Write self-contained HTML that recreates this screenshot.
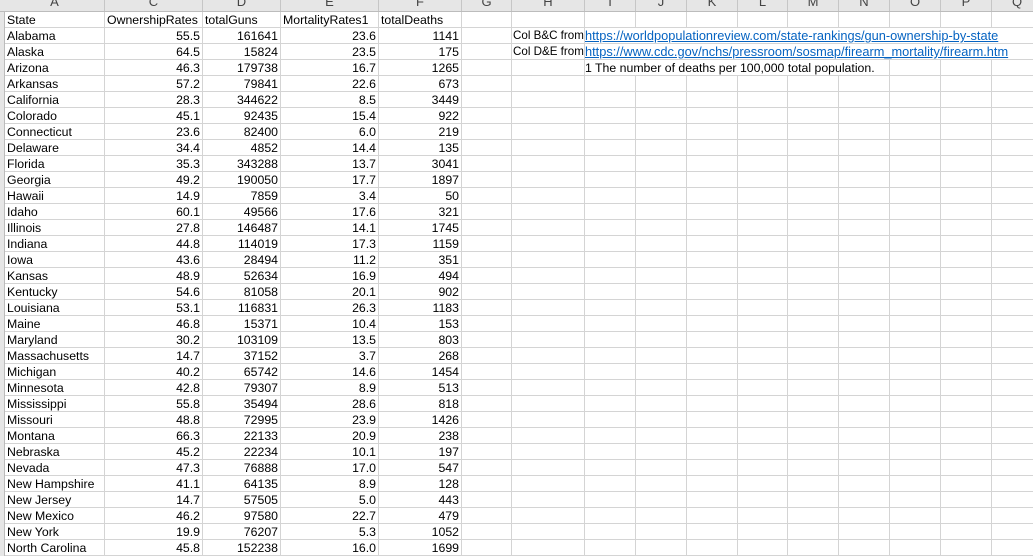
<!DOCTYPE html>
<html><head><meta charset="utf-8"><style>
html,body{margin:0;padding:0;width:1033px;height:556px;overflow:hidden;background:#fff;font-family:"Liberation Sans",Arial,sans-serif;}
#hdr{position:absolute;left:0;top:0;width:1033px;height:11px;background:#e6e6e6;border-bottom:1px solid #bcbcbc;overflow:hidden;}
#hdr div{position:absolute;top:-6px;height:17px;text-align:center;font-size:13px;color:#444;border-right:1px solid #c6c6c6;box-sizing:border-box;}
#left{position:absolute;left:0;top:12px;width:5px;height:544px;background:#e6e6e6;border-right:1px solid #bcbcbc;box-sizing:border-box;}
#grid{position:absolute;left:5px;top:12px;width:1028px;height:544px;background:repeating-linear-gradient(to bottom,transparent 0,transparent 15px,#d4d4d4 15px,#d4d4d4 16px);}
.v{position:absolute;top:12px;width:1px;height:544px;background:#d4d4d4;}
.r{position:absolute;left:0;width:1033px;height:15px;font-size:12.3px;line-height:16px;white-space:nowrap;color:#000;}
.r span{position:absolute;top:0;}
.a{left:7px;}
.c{left:104px;width:96px;text-align:right;}
.d{left:202px;width:76px;text-align:right;}
.e{left:280px;width:96px;text-align:right;}
.f{left:378px;width:81px;text-align:right;}
.h1{left:513px;font-size:11.6px;}
.c1{left:585px;background:#fff;padding-right:3px;height:15px;}
a{color:#0563c1;text-decoration:underline;font-size:12.8px;}
</style></head><body>
<div id="hdr">
<div style="left:5px;width:100px">A</div><div style="left:105px;width:98px">C</div><div style="left:203px;width:78px">D</div><div style="left:281px;width:98px">E</div><div style="left:379px;width:83px">F</div><div style="left:462px;width:50px">G</div><div style="left:512px;width:73px">H</div><div style="left:585px;width:51px">I</div><div style="left:636px;width:51px">J</div><div style="left:687px;width:51px">K</div><div style="left:738px;width:50px">L</div><div style="left:788px;width:51px">M</div><div style="left:839px;width:51px">N</div><div style="left:890px;width:51px">O</div><div style="left:941px;width:51px">P</div><div style="left:992px;width:51px">Q</div>
</div>
<div id="left"></div>
<div id="grid"></div>
<div class="v" style="left:104px"></div><div class="v" style="left:202px"></div><div class="v" style="left:280px"></div><div class="v" style="left:378px"></div><div class="v" style="left:461px"></div><div class="v" style="left:511px"></div><div class="v" style="left:584px"></div><div class="v" style="left:635px"></div><div class="v" style="left:686px"></div><div class="v" style="left:737px"></div><div class="v" style="left:787px"></div><div class="v" style="left:838px"></div><div class="v" style="left:889px"></div><div class="v" style="left:940px"></div><div class="v" style="left:991px"></div>

<div class="r" style="top:12px"><span class="a">State</span><span style="left:107px">OwnershipRates</span><span style="left:205px">totalGuns</span><span style="left:283px">MortalityRates1</span><span style="left:381px">totalDeaths</span></div>
<div class="r" style="top:28px"><span class="a">Alabama</span><span class="c">55.5</span><span class="d">161641</span><span class="e">23.6</span><span class="f">1141</span><span class="h1">Col B&amp;C from</span><span class="c1"><a>https://worldpopulationreview.com/state-rankings/gun-ownership-by-state</a></span></div>
<div class="r" style="top:44px"><span class="a">Alaska</span><span class="c">64.5</span><span class="d">15824</span><span class="e">23.5</span><span class="f">175</span><span class="h1">Col D&amp;E from</span><span class="c1"><a>https://www.cdc.gov/nchs/pressroom/sosmap/firearm_mortality/firearm.htm</a></span></div>
<div class="r" style="top:60px"><span class="a">Arizona</span><span class="c">46.3</span><span class="d">179738</span><span class="e">16.7</span><span class="f">1265</span><span class="c1">1 The number of deaths per 100,000 total population.</span></div>
<div class="r" style="top:76px"><span class="a">Arkansas</span><span class="c">57.2</span><span class="d">79841</span><span class="e">22.6</span><span class="f">673</span></div>
<div class="r" style="top:92px"><span class="a">California</span><span class="c">28.3</span><span class="d">344622</span><span class="e">8.5</span><span class="f">3449</span></div>
<div class="r" style="top:108px"><span class="a">Colorado</span><span class="c">45.1</span><span class="d">92435</span><span class="e">15.4</span><span class="f">922</span></div>
<div class="r" style="top:124px"><span class="a">Connecticut</span><span class="c">23.6</span><span class="d">82400</span><span class="e">6.0</span><span class="f">219</span></div>
<div class="r" style="top:140px"><span class="a">Delaware</span><span class="c">34.4</span><span class="d">4852</span><span class="e">14.4</span><span class="f">135</span></div>
<div class="r" style="top:156px"><span class="a">Florida</span><span class="c">35.3</span><span class="d">343288</span><span class="e">13.7</span><span class="f">3041</span></div>
<div class="r" style="top:172px"><span class="a">Georgia</span><span class="c">49.2</span><span class="d">190050</span><span class="e">17.7</span><span class="f">1897</span></div>
<div class="r" style="top:188px"><span class="a">Hawaii</span><span class="c">14.9</span><span class="d">7859</span><span class="e">3.4</span><span class="f">50</span></div>
<div class="r" style="top:204px"><span class="a">Idaho</span><span class="c">60.1</span><span class="d">49566</span><span class="e">17.6</span><span class="f">321</span></div>
<div class="r" style="top:220px"><span class="a">Illinois</span><span class="c">27.8</span><span class="d">146487</span><span class="e">14.1</span><span class="f">1745</span></div>
<div class="r" style="top:236px"><span class="a">Indiana</span><span class="c">44.8</span><span class="d">114019</span><span class="e">17.3</span><span class="f">1159</span></div>
<div class="r" style="top:252px"><span class="a">Iowa</span><span class="c">43.6</span><span class="d">28494</span><span class="e">11.2</span><span class="f">351</span></div>
<div class="r" style="top:268px"><span class="a">Kansas</span><span class="c">48.9</span><span class="d">52634</span><span class="e">16.9</span><span class="f">494</span></div>
<div class="r" style="top:284px"><span class="a">Kentucky</span><span class="c">54.6</span><span class="d">81058</span><span class="e">20.1</span><span class="f">902</span></div>
<div class="r" style="top:300px"><span class="a">Louisiana</span><span class="c">53.1</span><span class="d">116831</span><span class="e">26.3</span><span class="f">1183</span></div>
<div class="r" style="top:316px"><span class="a">Maine</span><span class="c">46.8</span><span class="d">15371</span><span class="e">10.4</span><span class="f">153</span></div>
<div class="r" style="top:332px"><span class="a">Maryland</span><span class="c">30.2</span><span class="d">103109</span><span class="e">13.5</span><span class="f">803</span></div>
<div class="r" style="top:348px"><span class="a">Massachusetts</span><span class="c">14.7</span><span class="d">37152</span><span class="e">3.7</span><span class="f">268</span></div>
<div class="r" style="top:364px"><span class="a">Michigan</span><span class="c">40.2</span><span class="d">65742</span><span class="e">14.6</span><span class="f">1454</span></div>
<div class="r" style="top:380px"><span class="a">Minnesota</span><span class="c">42.8</span><span class="d">79307</span><span class="e">8.9</span><span class="f">513</span></div>
<div class="r" style="top:396px"><span class="a">Mississippi</span><span class="c">55.8</span><span class="d">35494</span><span class="e">28.6</span><span class="f">818</span></div>
<div class="r" style="top:412px"><span class="a">Missouri</span><span class="c">48.8</span><span class="d">72995</span><span class="e">23.9</span><span class="f">1426</span></div>
<div class="r" style="top:428px"><span class="a">Montana</span><span class="c">66.3</span><span class="d">22133</span><span class="e">20.9</span><span class="f">238</span></div>
<div class="r" style="top:444px"><span class="a">Nebraska</span><span class="c">45.2</span><span class="d">22234</span><span class="e">10.1</span><span class="f">197</span></div>
<div class="r" style="top:460px"><span class="a">Nevada</span><span class="c">47.3</span><span class="d">76888</span><span class="e">17.0</span><span class="f">547</span></div>
<div class="r" style="top:476px"><span class="a">New Hampshire</span><span class="c">41.1</span><span class="d">64135</span><span class="e">8.9</span><span class="f">128</span></div>
<div class="r" style="top:492px"><span class="a">New Jersey</span><span class="c">14.7</span><span class="d">57505</span><span class="e">5.0</span><span class="f">443</span></div>
<div class="r" style="top:508px"><span class="a">New Mexico</span><span class="c">46.2</span><span class="d">97580</span><span class="e">22.7</span><span class="f">479</span></div>
<div class="r" style="top:524px"><span class="a">New York</span><span class="c">19.9</span><span class="d">76207</span><span class="e">5.3</span><span class="f">1052</span></div>
<div class="r" style="top:540px"><span class="a">North Carolina</span><span class="c">45.8</span><span class="d">152238</span><span class="e">16.0</span><span class="f">1699</span></div>
</body></html>
